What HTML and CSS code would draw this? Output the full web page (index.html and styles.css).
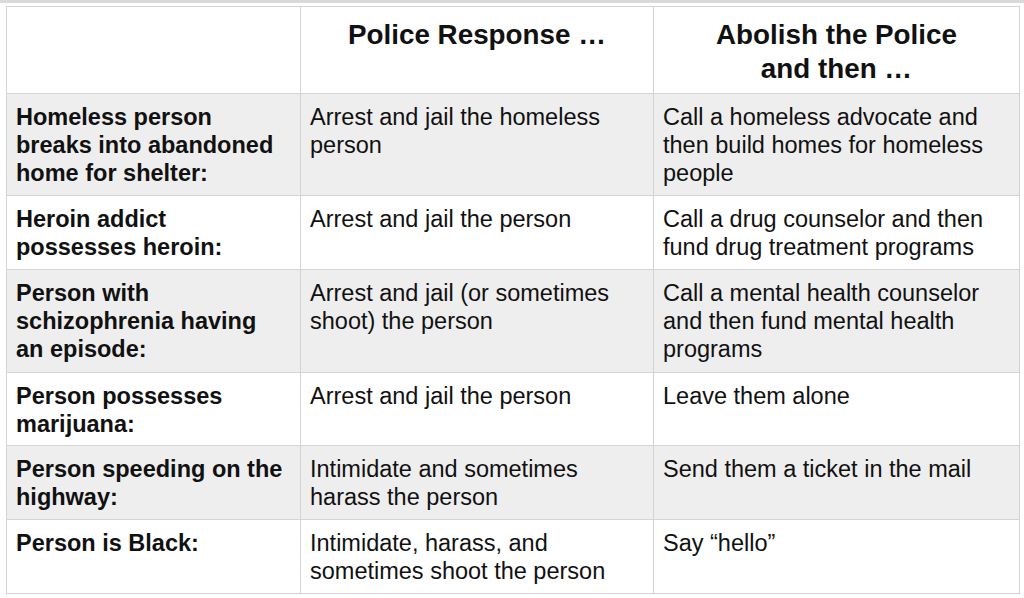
FILE: index.html
```html
<!DOCTYPE html>
<html>
<head>
<meta charset="utf-8">
<link rel="stylesheet" href="styles.css">
</head>
<body>
<div class="strip"></div>
<table class="grid">
  <colgroup>
    <col class="c1"><col class="c2"><col class="c3">
  </colgroup>
  <thead>
    <tr class="r-head">
      <th></th>
      <th>Police Response …</th>
      <th>Abolish the Police<br>and then …</th>
    </tr>
  </thead>
  <tbody>
    <tr class="r-tall shade">
      <td class="lbl">Homeless person breaks into abandoned home for shelter:</td>
      <td>Arrest and jail the homeless person</td>
      <td>Call a homeless advocate and then build homes for homeless people</td>
    </tr>
    <tr class="r-short">
      <td class="lbl">Heroin addict possesses heroin:</td>
      <td>Arrest and jail the person</td>
      <td>Call a drug counselor and then fund drug treatment programs</td>
    </tr>
    <tr class="r-tall2 shade">
      <td class="lbl">Person with schizophrenia having an episode:</td>
      <td>Arrest and jail (or sometimes shoot) the person</td>
      <td>Call a mental health counselor and then fund mental health programs</td>
    </tr>
    <tr class="r-short2">
      <td class="lbl">Person possesses marijuana:</td>
      <td>Arrest and jail the person</td>
      <td>Leave them alone</td>
    </tr>
    <tr class="r-short shade">
      <td class="lbl">Person speeding on the highway:</td>
      <td>Intimidate and sometimes harass the person</td>
      <td>Send them a ticket in the mail</td>
    </tr>
    <tr class="r-short">
      <td class="lbl">Person is Black:</td>
      <td>Intimidate, harass, and sometimes shoot the person</td>
      <td>Say “hello”</td>
    </tr>
  </tbody>
</table>
</body>
</html>
```

FILE: styles.css
```css
html, body {
  margin: 0;
  padding: 0;
  background: #ffffff;
}
body {
  font-family: "Liberation Sans", Arial, Helvetica, sans-serif;
  color: #111111;
  width: 1024px;
  height: 598px;
  overflow: hidden;
}
.strip {
  height: 3px;
  background: #d9d9d9;
}
.grid {
  margin: 3px 0 0 6px;
  border-collapse: collapse;
  table-layout: fixed;
  width: 1013px;
}
.c1 { width: 294px; }
.c2 { width: 353px; }
.c3 { width: 366px; }
.grid th, .grid td {
  border: 1px solid #d4d4d4;
  vertical-align: top;
  text-align: left;
}
.grid th {
  font-size: 27.8px;
  line-height: 34px;
  font-weight: bold;
  text-align: center;
  padding: 11px 10px 0 10px;
}
.grid td {
  font-size: 23.5px;
  line-height: 28px;
  padding: 9px 10px 0 9px;
}
.grid td.lbl {
  font-weight: bold;
}
.shade td { background: #eeeeee; }
.r-head { height: 87px; }
.r-tall { height: 102px; }
.r-tall2 { height: 103px; }
.r-short { height: 74px; }
.r-short2 { height: 73px; }
```
